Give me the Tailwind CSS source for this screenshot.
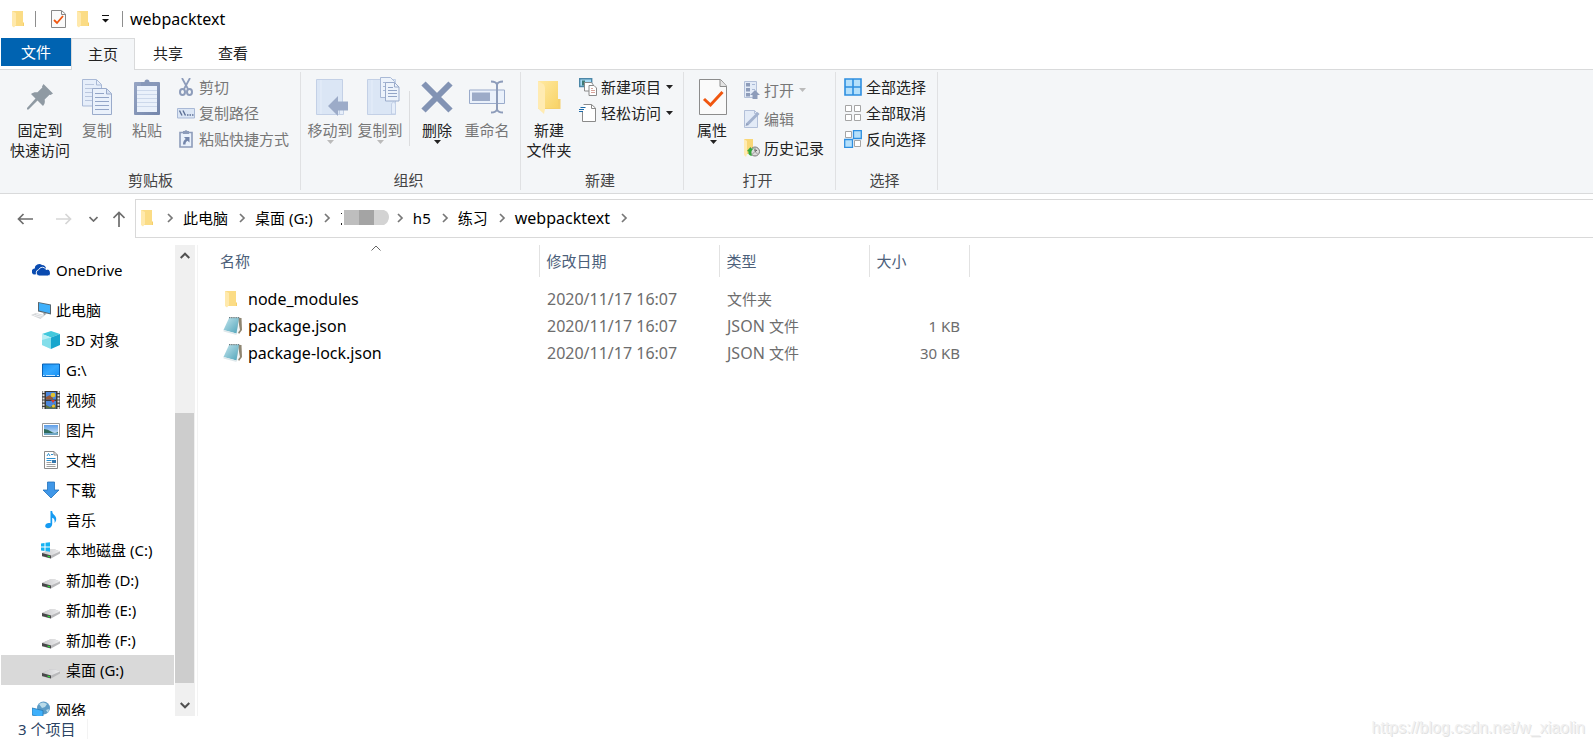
<!DOCTYPE html>
<html lang="zh-CN">
<head>
<meta charset="utf-8">
<title>webpacktext</title>
<script src="https://cdn.jsdelivr.net/npm/@tailwindcss/browser@4"></script>
</head>
<body class="flex h-screen flex-col overflow-hidden bg-white font-['Noto_Sans','Noto_Sans_CJK_SC',sans-serif] text-[15px] leading-5 text-black">

<svg class="absolute size-0" aria-hidden="true">
  <linearGradient id="fold" x1="0" x2="1" y1="0" y2="1"><stop offset="0" stop-color="#ffe9a2"/><stop offset="1" stop-color="#f8d366"/></linearGradient>
  <linearGradient id="clip" x1="0" x2="1" y1="0" y2="1"><stop offset="0" stop-color="#96a5c4"/><stop offset="1" stop-color="#7486ab"/></linearGradient>
  <linearGradient id="note" x1="0" x2="1" y1="0" y2="1"><stop offset="0" stop-color="#c4e6ee"/><stop offset="1" stop-color="#4fa3b9"/></linearGradient>
  <linearGradient id="blue" x1="0" x2="1" y1="0" y2="1"><stop offset="0" stop-color="#1590f5"/><stop offset=".5" stop-color="#35a8ff"/><stop offset="1" stop-color="#1590f5"/></linearGradient>
  <linearGradient id="sky" x1="0" x2="0" y1="0" y2="1"><stop offset="0" stop-color="#5e9ee8"/><stop offset="1" stop-color="#d9ecf8"/></linearGradient>
  <linearGradient id="disk" x1="0" x2="1" y1="0" y2="0"><stop offset="0" stop-color="#c9c9cb"/><stop offset="1" stop-color="#ececee"/></linearGradient>
  <symbol id="folder" viewBox="0 0 14 18"><path d="M10 1h2v11.500h1V16h-3z" fill="#f6d06a"/><path d="M1 1h11v15H1z" fill="#fbdc85"/><path d="M1 1l4 2v12l-2 2.500-2-1.500z" fill="#ffe9ac"/></symbol>
  <symbol id="doccheck" viewBox="0 0 28 36"><path d="M.5.500h21L27.500 7v28.500H.5z" fill="#fafafa" stroke="#8c8c8c"/><path d="M21 1v6.500h6.500" fill="#e4e4e4" stroke="#8c8c8c"/><path d="M5 20l6.500 6L23.500 13" fill="none" stroke="#f0560f" stroke-width="3"/></symbol>
  <symbol id="drive" viewBox="0 0 18 18"><path d="M0 12L8 8.500h5l5 2v2L9 17.500l-9-2z" fill="#b9b9bb"/><path d="M0 12L8 8.500h5l5 2-9 4z" fill="url(#disk)"/><path d="M0 12l9 2.500v3L0 15z" fill="#48484a"/><path d="M5.500 14.500l2.500.7v1.200l-2.500-.7z" fill="#2ee03a"/></symbol>
  <symbol id="notepad" viewBox="0 0 20 20"><path d="M7 1.500l11.500.5.500 12L16 18z" fill="#8f8672"/><path d="M15 3l2 11-3.500 4.500z" fill="#f2f5f6"/><path d="M6 2l10-.500L13.500 17.500.500 14z" fill="url(#note)"/><path d="M.5 14l13 3.500v1.500L.500 15.500z" fill="#dfe8eb"/><path d="M6 1.700h11" stroke="#697d84" stroke-width="1.200" stroke-dasharray="1 .8"/></symbol>
  <symbol id="tri" viewBox="0 0 7 4"><path d="M0 0h7L3.500 4z" fill="currentColor"/></symbol>
  <symbol id="chev" viewBox="0 0 27 10"><path d="M12 1l4 4-4 4" fill="none" stroke="#777" stroke-width="1.700"/></symbol>
</svg>

<header class="flex h-[38px] shrink-0 items-center">
  <svg class="ml-[11px] h-[18px] w-[14px]"><use href="#folder"/></svg>
  <span class="ml-[10px] h-4 w-px bg-[#8e8e8e]"></span>
  <button class="ml-[15px]" aria-label="属性"><svg class="h-[18px] w-[15px]" viewBox="0 0 15 18"><path d="M.5.500h10L14.500 4v13.500H.5z" fill="#fafafa" stroke="#888"/><path d="M10.500 1v3.500h4" fill="none" stroke="#888"/><path d="M3 10l3 3 6-7" fill="none" stroke="#f0560f" stroke-width="1.800"/></svg></button>
  <button class="ml-[10px]" aria-label="新建文件夹"><svg class="h-[18px] w-[14px]"><use href="#folder"/></svg></button>
  <button class="ml-[12px]" aria-label="自定义快速访问工具栏"><svg class="h-[8px] w-[7px]" viewBox="0 0 7 8"><path d="M0 .5h7" stroke="#111"/><path d="M0 4h7L3.500 7.500z" fill="#111"/></svg></button>
  <span class="ml-[13px] h-4 w-px bg-[#8e8e8e]"></span>
  <h1 class="ml-[7px] text-base leading-5">webpacktext</h1>
</header>

<nav class="relative flex h-8 shrink-0 border-b border-[#d9dadb] pl-px text-[#222]">
  <button class="h-7 w-[70px] bg-[#0063b1] text-white">文件</button>
  <button class="-mb-px h-8 w-16 border border-b-0 border-[#d9dadb] bg-[#f4f6f8] pb-0.5">主页</button>
  <button class="w-[66px] pb-0.5">共享</button>
  <button class="w-[64px] pb-0.5">查看</button>
</nav>

<section class="flex h-[124px] shrink-0 border-b border-[#d9dadb] bg-[#f4f6f8] pt-0.5 pb-[3px] pl-px text-[#222]">
  <div class="flex w-[300px] flex-col justify-between border-r border-[#e0e1e3]">
    <div class="flex pl-[7px]">
      <button class="flex w-16 flex-col items-center gap-[5px] pt-[7px]">
        <svg class="h-9 w-7" viewBox="0 0 28 36"><path d="M17.500 5l9.500 9.500-2.500 1.500-1-.3-4.800 4.800c.4 3 0 4.500-1.700 6.500L11.500 21.500 2.500 30.500l-1.500 0 0-1.500 8.500-9.500L5 15c2-1.700 4-2 6.500-1.700l4.800-4.800-.3-1z" fill="#8f9aa3"/></svg>
        <span>固定到<br>快速访问</span>
      </button>
      <button class="flex w-[50px] flex-col items-center gap-[5px] pt-[7px] text-[#777]">
        <svg class="h-9 w-[30px]" viewBox="0 0 30 36"><path d="M.5.500h14l5 5v21.500H.5z" fill="#e6eefa" stroke="#a9b9d6"/><path d="M14.500 1v5h5" fill="none" stroke="#a9b9d6"/><path d="M3 5.500h9M3 9.500h13M3 13.500h13M3 17.500h13M3 21.500h13" stroke="#b9c6de"/><path d="M10.500 9.500h14l5 5v21H10.500z" fill="#eaf1fb" stroke="#9aabcb"/><path d="M24.500 10v5h5" fill="#d6e1f3" stroke="#9aabcb"/><path d="M13 14.500h9M13 18.500h14M13 22.500h14M13 26.500h14M13 30.500h14" stroke="#93a5c7"/></svg>
        <span>复制</span>
      </button>
      <button class="flex w-[50px] flex-col items-center gap-[5px] pt-[7px] text-[#777]">
        <svg class="h-9 w-[26px]" viewBox="0 0 26 36"><rect y="3" width="26" height="33" rx="1" fill="url(#clip)"/><path d="M3 7h20v26H3z" fill="#eaf1fb"/><path d="M7 3h3.500a2.500 2.500 0 0 1 5 0H19v4H7z" fill="#8798b9"/><path d="M3 11.500h20M3 15.500h20M3 19.500h20M3 23.500h20M3 27.500h20" stroke="#ccd8eb"/></svg>
        <span>粘贴</span>
      </button>
      <div class="flex flex-col pt-0.5 pl-[5px] text-[#777]">
        <button class="flex h-[26px] items-center gap-1"><svg class="size-[18px]" viewBox="0 0 18 18"><path d="M5 0l6 11M13 0L7 11" stroke="#8d9cba" stroke-width="1.800"/><ellipse cx="5.500" cy="14" rx="2.500" ry="3" fill="none" stroke="#8d9cba" stroke-width="2"/><ellipse cx="12.500" cy="14" rx="2.500" ry="3" fill="none" stroke="#8d9cba" stroke-width="2"/></svg>剪切</button>
        <button class="flex h-[26px] items-center gap-1"><svg class="size-[18px]" viewBox="0 0 18 18"><path d="M.5 4.500h17v9.500H.5z" fill="#dbe6f5" stroke="#a9b9d6"/><path d="M2.500 6.500l2.500 5M6 6.500l2.500 5" stroke="#5d7096" stroke-width="1.400"/><path d="M10 11h1.500m1 0H14m1 0h1.500" stroke="#5d7096" stroke-width="1.500"/></svg>复制路径</button>
        <button class="flex h-[26px] items-center gap-1"><svg class="size-[18px]" viewBox="0 0 18 18"><path d="M3 2.500h12v14.500H3z" fill="#eaf1fb" stroke="#8d9cba" stroke-width="1.600"/><path d="M6 1h1.500L9 0l1.500 1H12v3H6z" fill="#8d9cba"/><path d="M7 7h5.500v5.500l-2-1.800c-1.500.8-2 2-2 3.800H6c0-2.500.8-4.300 2.700-5.500z" fill="#7486ab"/></svg>粘贴快捷方式</button>
      </div>
    </div>
    <h2 class="text-center text-[#444]">剪贴板</h2>
  </div>

  <div class="flex w-[220px] flex-col justify-between border-r border-[#e0e1e3]">
    <div class="flex pl-1">
      <button class="flex w-[50px] flex-col items-center pt-[7px] text-[#777]">
        <svg class="mb-[5px] ml-1 h-9 w-8 overflow-visible" viewBox="0 0 32 36"><path d="M.5.500h26v35H.5z" fill="#dbe6f5" stroke="#c3d0e6"/><path d="M5 1v34" stroke="#e6eefa"/><path d="M23.500 24h4v11.500h-4z" fill="#e6eefa" stroke="#c3d0e6"/><path d="M12 27l10-10v5.500h10v9H22V37z" fill="#9cabc8"/></svg>
        <span>移动到</span><svg class="h-1 w-[7px] text-[#bbb]"><use href="#tri"/></svg>
      </button>
      <button class="flex w-[50px] flex-col items-center pt-[7px] text-[#777]">
        <svg class="mb-[5px] ml-2 h-9 w-[34px] overflow-visible" viewBox="0 0 34 36"><path d="M.5.500h28v35H.5z" fill="#dbe6f5" stroke="#c3d0e6"/><path d="M5 1v34" stroke="#e6eefa"/><path d="M24.500 35V25q2-4 4 0v10z" fill="#e6eefa" stroke="#c3d0e6"/><path d="M13.500-1.500h10l4 4v16h-14z" fill="#edf3fb" stroke="#a9b9d6"/><path d="M16 3.500h3M16 7.500h3M16 11.500h3" stroke="#a9b9d6"/><path d="M18.500 3.500h9l4.500 4.500v14H18.500z" fill="#edf3fb" stroke="#9aabcb"/><path d="M27.500 4v4H32" fill="none" stroke="#9aabcb"/><path d="M21 8.500h5M21 11.500h9M21 14.500h9M21 17.500h9" stroke="#93a5c7"/></svg>
        <span>复制到</span><svg class="h-1 w-[7px] text-[#bbb]"><use href="#tri"/></svg>
      </button>
      <span class="mt-[19px] mr-[2px] ml-1 h-[55px] w-px bg-[#dcdddf]"></span>
      <button class="flex w-[50px] flex-col items-center pt-[7px]">
        <svg class="mb-[5px] h-9 w-8" viewBox="0 0 32 36"><path d="M2.500 4.500l27 27M29.500 4.500l-27 27" stroke="#8293b4" stroke-width="6"/></svg>
        <span>删除</span><svg class="h-1 w-[7px]"><use href="#tri"/></svg>
      </button>
      <button class="flex w-[50px] flex-col items-center pt-[7px] text-[#777]">
        <svg class="mb-[5px] h-9 w-9" viewBox="0 0 36 36"><path d="M.5 11h35v13.500H.5z" fill="#eaf1fb" stroke="#9aabcb"/><path d="M3 13.500h18v8.500H3z" fill="#9cabc8"/><path d="M28 4v28" stroke="#8d9cba" stroke-width="2"/><path d="M22 2.500q5 0 6 3 1-3 6-3M22 33.500q5 0 6-3 1 3 6 3" fill="none" stroke="#8d9cba" stroke-width="2"/></svg>
        <span>重命名</span>
      </button>
    </div>
    <h2 class="pr-1 text-center text-[#444]">组织</h2>
  </div>

  <div class="flex w-[163px] flex-col justify-between border-r border-[#e0e1e3]">
    <div class="flex pl-[3px]">
      <button class="flex w-[50px] flex-col items-center gap-[5px] pt-[7px]">
        <svg class="h-9 w-6" viewBox="0 0 24 36"><path d="M4 2h17v18h2v10H6z" fill="#f3cb62"/><path d="M1 2h20v28H1z" fill="url(#fold)"/><path d="M8 8.500V30l-1 5-6-5.500V2l6 3.500z" fill="#ffebb2"/><path d="M21 20h2.500v10H8V29h13z" fill="#f5d06d"/></svg>
        <span class="whitespace-nowrap">新建<br>文件夹</span>
      </button>
      <div class="flex flex-col pt-0.5 pl-[5px]">
        <button class="flex h-[26px] items-center gap-1"><svg class="size-[18px]" viewBox="0 0 18 18"><path d="M.7.700h12v7.800H.7z" fill="#a8dcf5" stroke="#4c87a8" stroke-width="1.400"/><path d="M3 2.500h3v5H3z" fill="#3f7b76"/><path d="M5.500 4.500h7l1.500 2v6.500H5.500z" fill="#fff" stroke="#8a8a8a"/><path d="M10 7.500h5l2.500 2.500v7.500H10z" fill="#fff" stroke="#8a8a8a"/><path d="M12 10.500h2M12 12.500h4M12 14.500h4" stroke="#d8a49b"/></svg>新建项目<svg class="ml-px h-1 w-[7px]"><use href="#tri"/></svg></button>
        <button class="flex h-[26px] items-center gap-1"><svg class="size-[18px]" viewBox="0 0 18 18"><path d="M4.500.500h8L16.500 4v13.500H3.500V7" fill="#fff" stroke="#8a8a8a"/><path d="M12.500.500V4.500h4" fill="none" stroke="#8a8a8a"/><path d="M1.500 3.500h5M0 5.500h5M0 7.500h4" stroke="#1d6aa8"/></svg>轻松访问<svg class="ml-px h-1 w-[7px]"><use href="#tri"/></svg></button>
      </div>
    </div>
    <h2 class="pr-1 text-center text-[#444]">新建</h2>
  </div>

  <div class="flex w-[152px] flex-col justify-between border-r border-[#e0e1e3]">
    <div class="flex pl-[3px]">
      <button class="flex w-[50px] flex-col items-center pt-[7px]">
        <svg class="mb-[5px] ml-0.5 h-9 w-7"><use href="#doccheck"/></svg>
        <span>属性</span><svg class="ml-0.5 h-1 w-[7px]"><use href="#tri"/></svg>
      </button>
      <div class="flex flex-col pt-[3px] pl-[5px]">
        <button class="flex h-[29px] items-center gap-1 text-[#777]"><svg class="size-[18px]" viewBox="0 0 18 18"><path d="M2.500.500h12v16h-12z" fill="#e3ebf7" stroke="#b3c0d9"/><path d="M4 2h4v3.500H4zM4 7h4v3.500H4zM4 12h4v3.500H4z" fill="#8d9cba"/><path d="M10 3.500h3M10 8.500h3" stroke="#a9b9d6"/><path d="M13 9l5 5h-2.500v4h-5v-4H8z" fill="#8d9cba"/></svg>打开<svg class="ml-px h-1 w-[7px] text-[#bbb]"><use href="#tri"/></svg></button>
        <button class="flex h-[29px] items-center gap-1 text-[#777]"><svg class="size-[18px]" viewBox="0 0 18 18"><path d="M2.500.500h10l3 3v14h-13z" fill="#e3ebf7" stroke="#b3c0d9"/><path d="M12.500.500v3h3" fill="none" stroke="#b3c0d9"/><path d="M5 14.500L16.500 3" stroke="#a3b2ce" stroke-width="3"/><path d="M3.500 16l1-3 2 2z" fill="#8d9cba"/></svg>编辑</button>
        <button class="flex h-[29px] items-center gap-1"><svg class="size-[18px]" viewBox="0 0 18 18"><path d="M2 0h9v15H2z" fill="#f9d776"/><path d="M2 0l3 2v13l-1 3-2-2z" fill="#ffebb2"/><circle cx="13" cy="12.500" r="4.500" fill="#dcdcdc" stroke="#777"/><path d="M13 9.500v3l2-1.500M11 14.500l1-1M15 14.500l-1-1" fill="none" stroke="#555"/><path d="M5 12l3.500-4 1 2 3-1c-3 2-4 4-2.500 8-3-.5-4-2-3.500-4.500z" fill="#34a83c"/></svg>历史记录</button>
      </div>
    </div>
    <h2 class="pr-1 text-center text-[#444]">打开</h2>
  </div>

  <div class="flex w-[102px] flex-col justify-between border-r border-[#e0e1e3]">
    <div class="flex flex-col pt-0.5 pl-2">
      <button class="flex h-[26px] items-center gap-1"><svg class="size-[18px]" viewBox="0 0 18 18"><path d="M1 1h16v16H1zM9 1v16M1 9h16" fill="#b5e0fb" stroke="#2e8fe0" stroke-width="1.600"/></svg>全部选择</button>
      <button class="flex h-[26px] items-center gap-1"><svg class="size-[18px]" viewBox="0 0 18 18"><path d="M1.500 1.500h6v6h-6zM10.500 1.500h6v6h-6zM1.500 10.500h6v6h-6zM10.500 10.500h6v6h-6z" fill="#fff" stroke="#a5a5a5"/></svg>全部取消</button>
      <button class="flex h-[26px] items-center gap-1"><svg class="size-[18px]" viewBox="0 0 18 18"><path d="M1.500 1.500h6v6h-6zM10.500 10.500h6v6h-6z" fill="#fff" stroke="#a5a5a5"/><path d="M9.500.700h7.800v7.800H9.500zM.7 9.500h7.800v7.800H.7z" fill="#b5e0fb" stroke="#2e8fe0" stroke-width="1.300"/></svg>反向选择</button>
    </div>
    <h2 class="pr-1 text-center text-[#444]">选择</h2>
  </div>
</section>

<div class="mt-[5px] flex h-[39px] shrink-0 items-center">
  <button class="ml-[17px]" aria-label="后退"><svg class="h-3 w-4" viewBox="0 0 16 12"><path d="M16 6H1.500M6.500 1l-5 5 5 5" fill="none" stroke="#6d6d6d" stroke-width="1.700"/></svg></button>
  <button class="ml-[23px]" aria-label="前进" disabled><svg class="h-3 w-4" viewBox="0 0 16 12"><path d="M0 6h14.500M9.500 1l5 5-5 5" fill="none" stroke="#d6d6d6" stroke-width="1.700"/></svg></button>
  <button class="ml-[17px]" aria-label="最近浏览的位置"><svg class="h-[6px] w-[9px]" viewBox="0 0 9 6"><path d="M.5 1l4 4 4-4" fill="none" stroke="#6d6d6d" stroke-width="1.700"/></svg></button>
  <button class="ml-[15px]" aria-label="上移"><svg class="h-4 w-[12px]" viewBox="0 0 12 16"><path d="M6 16V1.500M.5 7L6 1.500 11.500 7" fill="none" stroke="#6d6d6d" stroke-width="1.700"/></svg></button>
  <div class="ml-[10px] flex h-full grow items-center border border-r-0 border-[#d9d9d9] pb-0.5 pl-[4px]">
    <svg class="mr-0.5 h-[18px] w-[14px]"><use href="#folder"/></svg>
    <svg class="h-[10px] w-[27px]"><use href="#chev"/></svg>
    <a href="#pc">此电脑</a>
    <svg class="h-[10px] w-[27px]"><use href="#chev"/></svg>
    <a href="#g">桌面 (G:)</a>
    <svg class="h-[10px] w-[27px]"><use href="#chev"/></svg>
    <svg class="-mr-[3px] h-[15px] w-[49px]" viewBox="0 0 49 15"><path d="M1 3h1v1H1zM1 13h1v2H1z" fill="#222"/><path d="M4 0h15v15H4z" fill="#bebebe"/><path d="M19 0h15v15H19z" fill="#a4a4a4"/><path d="M34 0h10q5 2 5 7t-5 8H34z" fill="#d3d3d3"/></svg>
    <svg class="h-[10px] w-[27px]"><use href="#chev"/></svg>
    <a href="#h5">h5</a>
    <svg class="h-[10px] w-[27px]"><use href="#chev"/></svg>
    <a href="#lx">练习</a>
    <svg class="h-[10px] w-[27px]"><use href="#chev"/></svg>
    <a href="#wp" class="text-base leading-5">webpacktext</a>
    <svg class="h-[10px] w-[27px]"><use href="#chev"/></svg>
  </div>
</div>

<main class="mt-[7px] flex min-h-0 grow">
  <nav class="w-[175px] shrink-0 overflow-hidden pt-[10px] pr-px pl-px">
    <a href="#od" class="mb-[10px] flex h-[30px] items-center gap-[6px] pl-[31px]"><svg class="size-[18px]" viewBox="0 0 18 18"><path d="M3 13.500a3 3 0 0 1-.3-6A4.500 4.500 0 0 1 10 4a4 4 0 0 1 4 3.500l-8 5z" fill="#0a4bb0"/><path d="M7 15a3.200 3.200 0 0 1-.3-6.300 4 4 0 0 1 7.300-.2 3 3 0 0 1 2 6.500z" fill="#0a4bb0" stroke="#fff" stroke-width=".9"/></svg>OneDrive</a>
    <a href="#pc" class="flex h-[30px] items-center gap-[6px] pl-[31px]"><svg class="size-[18px] overflow-visible" viewBox="0 0 18 18"><path d="M6 1l13 2.500v10L6 10.500z" fill="#56656f"/><path d="M7 2l11 2.200v8L7 9.500z" fill="#3fb0fb"/><path d="M11 11.500l4 1-3 2z" fill="#9aa3a8"/><path d="M-1 14l5-2 9 2.200L8.500 18z" fill="#d2d5d8"/><path d="M1.500 14.200l8 2M4 13l7 2" stroke="#fff" stroke-width=".7"/></svg>此电脑</a>
    <a href="#3d" class="flex h-[30px] items-center gap-[6px] pl-[41px]"><svg class="size-[18px]" viewBox="0 0 18 18"><path d="M9 0l9 3-9 3.500L0 3z" fill="#42c8dc"/><path d="M0 3l9 3.500V18l-9-4z" fill="#b9eef5"/><path d="M18 3L9 6.500V18l9-4z" fill="#18a6cd"/><path d="M0 14V9l9-2.500V18z" fill="#5fd3e2" opacity=".6"/></svg>3D 对象</a>
    <a href="#gd" class="flex h-[30px] items-center gap-[6px] pl-[41px]"><svg class="size-[18px]" viewBox="0 0 18 18"><path d="M.5 3h17v12.500H.5z" fill="url(#blue)" stroke="#0b62b4"/><path d="M1 14.500h1.500M4 14.500h9M15 14.500h2" stroke="#cfe9ff"/></svg>G:\</a>
    <a href="#v" class="flex h-[30px] items-center gap-[6px] pl-[41px]"><svg class="size-[18px]" viewBox="0 0 18 18"><path d="M0 0h18v18H0z" fill="#3b3b3b"/><path d="M1.500 0v18M16.500 0v18" stroke="#e6e6e6" stroke-width="2" stroke-dasharray="2 1.200"/><path d="M4 1h10v7.500H4zM4 10h10v7.500H4z" fill="#4a86dc"/><path d="M4 6l4-2 3 3v1.500H4z" fill="#93583a"/><circle cx="11" cy="4" r="2.300" fill="#dfc230"/><path d="M4 14l4 2 5-3 1 4.500H4z" fill="#5c7340"/><circle cx="11.500" cy="15" r="1.600" fill="#efc12c"/><path d="M9 9l2 3 2-3z" fill="#d8382e"/></svg>视频</a>
    <a href="#p" class="flex h-[30px] items-center gap-[6px] pl-[41px]"><svg class="size-[18px]" viewBox="0 0 18 18"><path d="M.5 2.500h17v13H.5z" fill="#fff" stroke="#9a9a9a"/><path d="M2 4h14v10H2z" fill="url(#sky)"/><path d="M2 8q4 0 7 2.500t7 .5v1.500H2z" fill="#2e6b5b"/><path d="M2 12h14v2H2z" fill="#6fa6c4"/></svg>图片</a>
    <a href="#d" class="flex h-[30px] items-center gap-[6px] pl-[41px]"><svg class="size-[18px]" viewBox="0 0 18 18"><path d="M2.500.500H12L15.500 4v13.500h-13z" fill="#fff" stroke="#8a8a8a"/><path d="M12 .5V4h3.500" fill="none" stroke="#8a8a8a"/><path d="M5 5l1.500-2.500L8 5M9 3.500h2M4.500 7.500h9M4.500 9.500h5" fill="none" stroke="#2b8fd0"/><path d="M10 9h4v3h-4z" fill="#3577ad"/><path d="M4.500 11.500h5M4.500 13.500h9M4.500 15.500h9" stroke="#a0a0a0"/></svg>文档</a>
    <a href="#dl" class="flex h-[30px] items-center gap-[6px] pl-[41px]"><svg class="size-[18px]" viewBox="0 0 18 18"><path d="M5.500 1h7v8h4.500L9 17 1 9h4.500z" fill="#3f97e8" stroke="#2271bb" stroke-width=".8"/></svg>下载</a>
    <a href="#m" class="flex h-[30px] items-center gap-[6px] pl-[41px]"><svg class="size-[18px]" viewBox="0 0 18 18"><path d="M8.500 0h1.700c0 4 4 4 4 8 0 1.800-.7 3-1.700 4 .5-3-.3-4.500-2.300-5.200V13c0 5-7 5.300-7 2 0-2.500 3-3.500 5.300-2.700z" fill="#159bf2"/></svg>音乐</a>
    <a href="#c" class="flex h-[30px] items-center gap-[6px] pl-[41px]"><svg class="size-[18px] overflow-visible" viewBox="0 0 18 18"><use href="#drive" width="18" height="18"/><path d="M-1 2.500l3.500-.5v3.500H-1zM3.500 1.800l4.500-.6v4.300H3.500zM-1 6.500h3.500v3.500L-1 9.500zM3.500 6.500H8v4.200l-4.500-.6z" fill="#16b3f2"/></svg>本地磁盘 (C:)</a>
    <a href="#dd" class="flex h-[30px] items-center gap-[6px] pl-[41px]"><svg class="size-[18px]"><use href="#drive"/></svg>新加卷 (D:)</a>
    <a href="#e" class="flex h-[30px] items-center gap-[6px] pl-[41px]"><svg class="size-[18px]"><use href="#drive"/></svg>新加卷 (E:)</a>
    <a href="#f" class="flex h-[30px] items-center gap-[6px] pl-[41px]"><svg class="size-[18px]"><use href="#drive"/></svg>新加卷 (F:)</a>
    <a href="#g" class="mb-[10px] flex h-[30px] items-center gap-[6px] bg-[#d9d9d9] pl-[41px]"><svg class="size-[18px]"><use href="#drive"/></svg>桌面 (G:)</a>
    <a href="#n" class="flex h-[30px] items-center gap-[6px] pl-[31px]"><svg class="size-[18px]" viewBox="0 0 18 18"><circle cx="11.500" cy="7" r="6.500" fill="#5d9cc6"/><path d="M7 3q4-3 8 0l-2 3-3 1zM14 9l3-1-1 4z" fill="#b9dbe9"/><path d="M0 7l11 2.500V17L0 14z" fill="#3fb0fb" stroke="#2678b4" stroke-width=".8"/></svg>网络</a>
  </nav>
  <div class="flex w-5 shrink-0 flex-col bg-[#f0f0f0]">
    <button class="flex h-[21px] items-center justify-center" aria-label="向上滚动"><svg class="h-[7px] w-[10px]" viewBox="0 0 10 7"><path d="M.7 6L5 1.700 9.300 6" fill="none" stroke="#505050" stroke-width="2"/></svg></button>
    <span class="grow-[147]"></span>
    <span class="mr-px grow-[270] bg-[#cdcdcd]"></span>
    <span class="grow-[12]"></span>
    <button class="flex h-[21px] items-center justify-center" aria-label="向下滚动"><svg class="h-[7px] w-[10px]" viewBox="0 0 10 7"><path d="M.7 1L5 5.300 9.300 1" fill="none" stroke="#505050" stroke-width="2"/></svg></button>
  </div>
  <div class="ml-[2px] grow border-l border-[#f3f3f3]">
    <table class="w-[771px] table-fixed border-collapse text-left">
      <colgroup><col class="w-[341px]"><col class="w-[180px]"><col class="w-[150px]"><col class="w-[100px]"></colgroup>
      <thead class="text-[#4c607a]">
        <tr class="h-8">
          <th class="relative border-r border-[#e2e2e2] p-0 pl-[22px] font-normal">名称<svg class="absolute top-0 left-[173px] h-[6px] w-[10px]" viewBox="0 0 10 6"><path d="M.5 5.500L5 1l4.500 4.500" fill="none" stroke="#666"/></svg></th>
          <th class="border-r border-[#e2e2e2] p-0 pl-[7px] font-normal">修改日期</th>
          <th class="border-r border-[#e2e2e2] p-0 pl-[7px] font-normal">类型</th>
          <th class="border-r border-[#e2e2e2] p-0 pl-[7px] font-normal">大小</th>
        </tr>
      </thead>
      <tbody class="text-[#6d6d6d]">
        <tr aria-hidden="true"><td colspan="4" class="h-2 p-0"></td></tr>
        <tr class="h-[27px]">
          <td class="p-0 pl-[25px] text-base leading-5 text-black"><span class="flex items-center gap-[5px]"><svg class="mr-1 h-[18px] w-4"><use href="#folder"/></svg>node_modules</span></td>
          <td class="p-0 pl-2 text-base leading-5">2020/11/17 16:07</td><td class="p-0 pl-2">文件夹</td><td class="p-0"></td>
        </tr>
        <tr class="h-[27px]">
          <td class="p-0 pl-[25px] text-base leading-5 text-black"><span class="flex items-center gap-[5px]"><svg class="size-5"><use href="#notepad"/></svg>package.json</span></td>
          <td class="p-0 pl-2 text-base leading-5">2020/11/17 16:07</td><td class="p-0 pl-2"><span class="text-base leading-5">JSON </span>文件</td><td class="p-0 pr-[9px] text-right">1 KB</td>
        </tr>
        <tr class="h-[27px]">
          <td class="p-0 pl-[25px] text-base leading-5 text-black"><span class="flex items-center gap-[5px]"><svg class="size-5"><use href="#notepad"/></svg>package-lock.json</span></td>
          <td class="p-0 pl-2 text-base leading-5">2020/11/17 16:07</td><td class="p-0 pl-2"><span class="text-base leading-5">JSON </span>文件</td><td class="p-0 pr-[9px] text-right">30 KB</td>
        </tr>
      </tbody>
    </table>
  </div>
</main>

<footer class="relative flex h-[30px] shrink-0 items-center pb-1 pl-[18px] text-[#2b4464]">
  <span class="border-r border-[#f3f3f3] pr-3">3 个项目</span>
  <span class="absolute right-2 bottom-2 font-['Liberation_Sans',sans-serif] text-base leading-5 text-[#f1f1f1] [text-shadow:1px_1px_0_#e2e2e2]">https://blog.csdn.net/w_xiaolin</span>
</footer>
</body>
</html>
